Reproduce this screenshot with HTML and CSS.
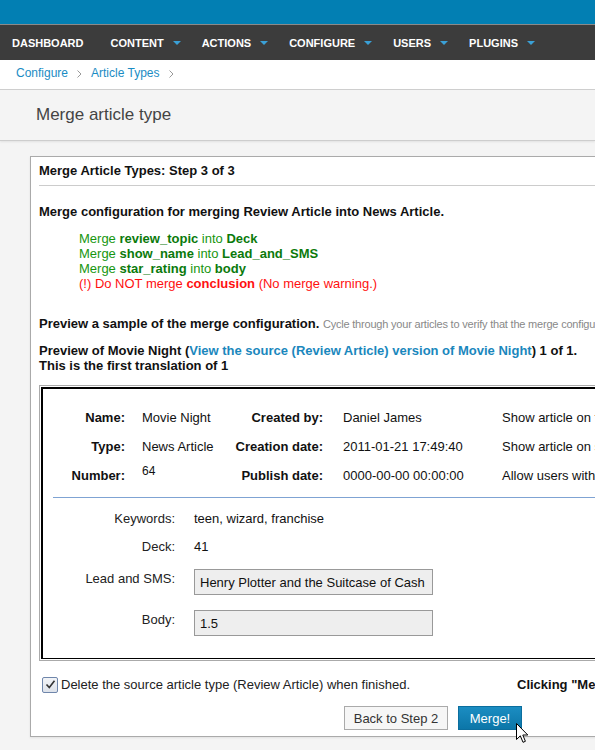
FILE: index.html
```html
<!DOCTYPE html>
<html lang="en">
<head>
    <meta charset="UTF-8">
    <meta name="viewport" content="width=device-width, initial-scale=1.0">
    <title>Merge article type</title>
    <link rel="stylesheet" href="styles.css">
</head>
<body>
    <div class="topbar"></div>
    <nav class="mainnav">
        <a class="nav-item" href="#">Dashboard</a>
        <a class="nav-item" href="#">Content <span class="caret"></span></a>
        <a class="nav-item" href="#">Actions <span class="caret"></span></a>
        <a class="nav-item" href="#">Configure <span class="caret"></span></a>
        <a class="nav-item" href="#">Users <span class="caret"></span></a>
        <a class="nav-item" href="#">Plugins <span class="caret"></span></a>
    </nav>
    <div class="crumbs">
        <a href="#">Configure</a>
        <svg class="sep" width="5" height="8" viewBox="0 0 5 8"><path d="M0.5 0.5 L4 4 L0.5 7.5" fill="none" stroke="#999" stroke-width="1"/></svg>
        <a href="#">Article Types</a>
        <svg class="sep" width="5" height="8" viewBox="0 0 5 8"><path d="M0.5 0.5 L4 4 L0.5 7.5" fill="none" stroke="#999" stroke-width="1"/></svg>
    </div>
    <div class="page-head">
        <h1>Merge article type</h1>
    </div>

    <div class="content">
        <div class="panel">
            <h2 class="panel-title">Merge Article Types: Step 3 of 3</h2>

            <p class="section-title">Merge configuration for merging Review Article into News Article.</p>
            <ul class="merge-list">
                <li class="ok">Merge <b>review_topic</b> into <b>Deck</b></li>
                <li class="ok">Merge <b>show_name</b> into <b>Lead_and_SMS</b></li>
                <li class="ok">Merge <b>star_rating</b> into <b>body</b></li>
                <li class="warn">(!) Do NOT merge <b>conclusion</b> (No merge warning.)</li>
            </ul>

            <p class="section-title sample">Preview a sample of the merge configuration. <span class="hint">Cycle through your articles to verify that the merge configuration is correct.</span></p>
            <p class="preview-title">Preview of Movie Night (<a href="#">View the source (Review Article) version of Movie Night</a>) 1 of 1.<br>This is the first translation of 1</p>

            <div class="preview-frame">
                <div class="preview">
                    <div class="meta">
                        <div class="lbl">Name:</div>
                        <div class="val">Movie Night</div>
                        <div class="lbl">Created by:</div>
                        <div class="val wide">Daniel James</div>
                        <div class="opt">Show article on front page</div>

                        <div class="lbl">Type:</div>
                        <div class="val">News Article</div>
                        <div class="lbl">Creation date:</div>
                        <div class="val wide">2011-01-21 17:49:40</div>
                        <div class="opt">Show article on section page</div>

                        <div class="lbl">Number:</div>
                        <div class="val raised">64</div>
                        <div class="lbl">Publish date:</div>
                        <div class="val wide">0000-00-00 00:00:00</div>
                        <div class="opt">Allow users without subscriptions to view the article</div>
                    </div>
                    <div class="divider"></div>
                    <div class="field">
                        <div class="field-label">Keywords:</div>
                        <div class="field-value">teen, wizard, franchise</div>
                    </div>
                    <div class="field">
                        <div class="field-label">Deck:</div>
                        <div class="field-value">41</div>
                    </div>
                    <div class="field field-box">
                        <div class="field-label">Lead and SMS:</div>
                        <input class="field-input" type="text" value="Henry Plotter and the Suitcase of Cash" readonly>
                    </div>
                    <div class="field field-box field-last">
                        <div class="field-label">Body:</div>
                        <input class="field-input" type="text" value="1.5" readonly>
                    </div>
                </div>
            </div>

            <div class="finish-row">
                <label class="delete-opt">
                    <span class="check">
                        <svg width="11" height="11" viewBox="0 0 11 11"><path d="M1.5 5.5 L4.3 8.6 L9.5 1.8" fill="none" stroke="#333" stroke-width="1.6"/></svg>
                    </span>
                    Delete the source article type (Review Article) when finished.
                </label>
                <strong class="notice">Clicking "Merge!" will merge the article types.</strong>
            </div>

            <div class="actions">
                <button class="btn">Back to Step 2</button>
                <button class="btn btn-primary">Merge!</button>
            </div>
        </div>
    </div>

    <svg class="cursor" width="13" height="21" viewBox="0 0 13 21">
        <path d="M0.5 0.5 L0.5 16.5 L4.3 12.8 L7 19.3 L9.4 18.3 L6.8 12 L11.8 12 Z" fill="#fff" stroke="#000" stroke-width="1"/>
    </svg>
</body>
</html>
```

FILE: styles.css
```css
html, body {
    overflow: hidden;
}

body {
    margin: 0;
    font-family: "Liberation Sans", Arial, sans-serif;
    font-size: 13px;
    color: #111;
    background: #f4f4f4;
    position: relative;
    height: 750px;
}

a {
    text-decoration: none;
}

/* top bars */
.topbar {
    height: 24px;
    background: #027fb3;
    border-bottom: 1px solid #8a8a8a;
}

.mainnav {
    height: 35px;
    background: #3c3c3c;
    display: flex;
    align-items: center;
    padding-left: 12px;
    white-space: nowrap;
}

.nav-item {
    color: #fff;
    font-weight: bold;
    font-size: 11px;
    text-transform: uppercase;
    margin-right: 21px;
    display: flex;
    align-items: center;
}

.nav-item:first-child {
    margin-right: 27px;
}

.caret {
    width: 0;
    height: 0;
    margin-left: 9px;
    border-left: 4px solid transparent;
    border-right: 4px solid transparent;
    border-top: 4px solid #3aa0d6;
}

.crumbs {
    background: #fff;
    border-bottom: 1px solid #cfcfcf;
    box-shadow: 0 1px 1px rgba(0, 0, 0, 0.06);
    display: flex;
    align-items: center;
    padding: 0 0 3px 16px;
    box-sizing: border-box;
    height: 30px;
    font-size: 12px;
}

.crumbs a {
    color: #1a8cc4;
}

.crumbs .sep {
    margin: 1px 9px 0 9px;
}

.page-head {
    height: 50px;
    background: #f4f4f4;
    border-bottom: 1px solid #cdcdcd;
    box-shadow: 0 1px 2px rgba(0, 0, 0, 0.08);
    display: flex;
    align-items: center;
    padding-left: 36px;
}

.page-head h1 {
    margin: 0;
    font-size: 17px;
    font-weight: normal;
    color: #444;
}

/* panel */
.content {
    padding: 15px 0 0 30px;
}

.panel {
    width: 800px;
    background: #fff;
    border: 1px solid #aaa;
    padding: 6px 8px 6px 8px;
    box-shadow: 0 1px 2px rgba(0, 0, 0, 0.08);
}

.panel-title {
    margin: 0;
    font-size: 13px;
    line-height: 16px;
    padding-bottom: 6px;
    border-bottom: 1px solid #ccc;
}

.section-title {
    margin: 18px 0 0 0;
    font-weight: bold;
    line-height: 16px;
}

.section-title.sample {
    margin-top: 25px;
    white-space: nowrap;
}

.hint {
    font-weight: normal;
    font-size: 11px;
    color: #888;
    letter-spacing: -0.2px;
}

.merge-list {
    list-style: none;
    margin: 11px 0 0 0;
    padding-left: 40px;
    line-height: 15px;
}

.merge-list .ok {
    color: #17960f;
}

.merge-list .ok b {
    color: #0b7a0b;
}

.merge-list .warn {
    color: #ff1010;
}

.preview-title {
    margin: 11px 0 0 0;
    font-weight: bold;
    line-height: 15px;
}

.preview-title a {
    color: #1a87bd;
}

/* preview box */
.preview-frame {
    margin-top: 12px;
    border: 1px solid #aaa;
    padding: 1px;
    width: 740px;
}

.preview {
    border-top: 2px solid #000;
    border-left: 2px solid #000;
    border-right: 1px solid #000;
    border-bottom: 1px solid #000;
    padding: 14px 0 22px 0;
}

.meta {
    display: grid;
    grid-template-columns: 82px 103px 95px 179px 300px;
    grid-auto-rows: 29px;
    align-items: center;
    line-height: 16px;
}

.meta .lbl {
    font-weight: bold;
    text-align: right;
}

.meta .val {
    padding-left: 17px;
    white-space: nowrap;
}

.meta .val.wide {
    padding-left: 20px;
}

.meta .raised {
    align-self: start;
    padding-top: 2px;
    font-size: 12px;
}

.meta .opt {
    white-space: nowrap;
}

.divider {
    margin: 7px 0 0 10px;
    border-top: 1px solid #7fa3d3;
}

.field {
    display: grid;
    grid-template-columns: 132px 239px;
    column-gap: 19px;
    margin-top: 12px;
    line-height: 16px;
}

.field:nth-child(3) {
    margin-top: 13px;
}

.field-label {
    text-align: right;
    color: #222;
}

.field-box {
    margin-top: 14px;
}

.field-box .field-label {
    padding-top: 2px;
}

.field-last {
    margin-top: 15px;
}

.field-input {
    box-sizing: border-box;
    width: 239px;
    height: 26px;
    margin: 0;
    padding: 0 5px;
    border: 1px solid #999;
    background: #eee;
    font-family: "Liberation Sans", Arial, sans-serif;
    font-size: 13px;
    color: #111;
    outline: none;
}

/* bottom of panel */
.finish-row {
    margin-top: 15px;
    display: flex;
    align-items: center;
    white-space: nowrap;
}

.delete-opt {
    width: 478px;
    display: flex;
    align-items: center;
    color: #222;
    line-height: 17px;
}

.check {
    width: 14px;
    height: 14px;
    margin: 0 3px 0 3px;
    border: 1px solid #6f86ab;
    border-radius: 2px;
    background: linear-gradient(#f2f4f7, #dde2ea);
    display: flex;
    align-items: center;
    justify-content: center;
}

.notice {
    font-weight: bold;
}

.actions {
    margin-top: 13px;
    padding-left: 305px;
    display: flex;
    gap: 10px;
}

.btn {
    height: 24px;
    padding: 0;
    border: 1px solid #aaa;
    background: #f6f6f6;
    color: #333;
    font-family: "Liberation Sans", Arial, sans-serif;
    font-size: 13px;
    width: 104px;
    white-space: nowrap;
}

.btn-primary {
    width: 64px;
    border-color: #0b6e9e;
    background: linear-gradient(#1b8dc2, #0c76a8);
    color: #fff;
}

.cursor {
    position: absolute;
    left: 516px;
    top: 723px;
}
```
